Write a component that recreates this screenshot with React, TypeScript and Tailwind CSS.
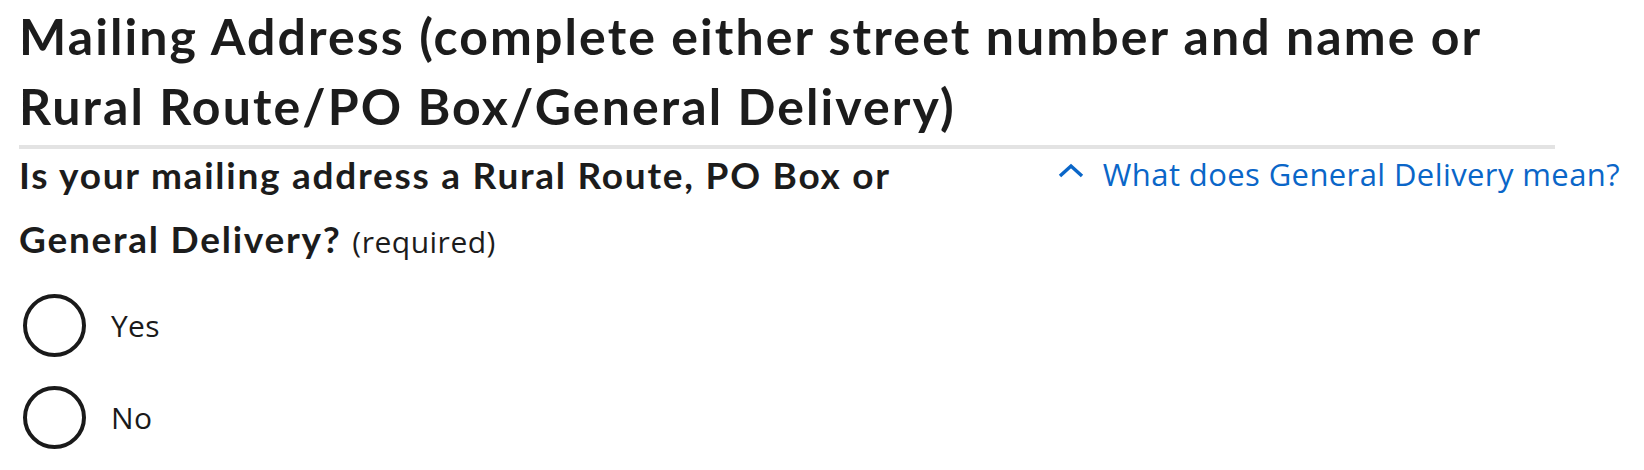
import React from 'react';

const Radio = ({ label }: { label: string }) => (
  <label className="flex items-center gap-[25px] cursor-pointer">
    <span className="block w-[63px] h-[63px] ml-[4px] rounded-full border-[4px] border-[#1a1a1a] bg-white shrink-0"></span>
    <span className="text-[30px] leading-[40px] text-[#1a1a1a] font-['Open_Sans',sans-serif] tracking-[0.3px]">{label}</span>
  </label>
);

const App = () => {
  return (
    <div className="w-[1644px] h-[470px] bg-white overflow-hidden pl-[19px] pr-[24px] font-['Open_Sans',sans-serif]">
      <h2 className="max-w-[1536px] font-['Lato','Liberation_Sans',sans-serif] font-bold text-[50px] leading-[70px] tracking-[2.1px] text-[#1c1c1c] pt-[1px] border-b-[4px] border-[#e3e3e3] pb-[4px]">
        Mailing Address (complete either street number and name or Rural Route/PO Box/General Delivery)
      </h2>

      <div className="flex justify-between -mt-[6px]">
        <p className="w-[930px] font-['Lato','Liberation_Sans',sans-serif] font-bold text-[37px] leading-[64px] tracking-[1.75px] text-[#1c1c1c]">
          Is your mailing address a Rural Route, PO Box or General Delivery?{' '}
          <span className="font-['Open_Sans',sans-serif] font-normal text-[30px] tracking-[0.5px] text-[#1c1c1c]">(required)</span>
        </p>
        <div className="pt-[11px]">
          <a href="#" className="flex items-center text-[#0a66c8] text-[31px] leading-[40px] tracking-[0.4px] font-['Open_Sans',sans-serif]">
            <svg width="26" height="16" viewBox="0 0 26 16" className="mr-[19px] -mt-[6px]" fill="none">
              <polyline points="2,13 13,3 24,13" stroke="#0a66c8" strokeWidth="3.5" />
            </svg>
            What does General Delivery mean?
          </a>
        </div>
      </div>

      <div className="mt-[20px] flex flex-col gap-[29px]">
        <Radio label="Yes" />
        <Radio label="No" />
      </div>
    </div>
  );
};

export default App;
